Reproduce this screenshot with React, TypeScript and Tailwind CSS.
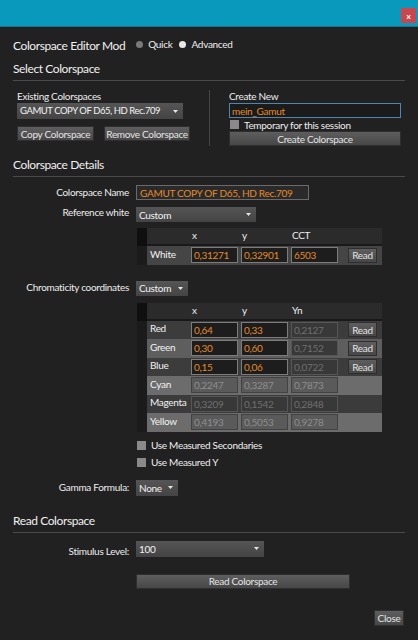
import React from "react";

const font = { fontFamily: "Lato, 'Liberation Sans', sans-serif" };

function Arrow() {
  return (
    <svg width="5" height="3" viewBox="0 0 5 3" className="shrink-0">
      <path d="M0 0 L5 0 L2.5 3 Z" fill="#e6e6e6" />
    </svg>
  );
}

function Dropdown({
  width,
  value,
  h = "h-[16px]",
  text = "text-[10px]",
}: {
  width: string;
  value: string;
  h?: string;
  text?: string;
}) {
  return (
    <div
      className={`${width} ${h} flex items-center justify-between pl-[3px] pr-[5px] bg-gradient-to-b from-[#555555] to-[#444444] ${text} text-[#f2f2f2] whitespace-nowrap`}
    >
      <span className="leading-none">{value}</span>
      <Arrow />
    </div>
  );
}

function Button({ className, children }: { className: string; children: React.ReactNode }) {
  return (
    <div
      className={`${className} flex items-center justify-center bg-gradient-to-b from-[#5e5e5e] to-[#474747] border border-[#2e2e2e] text-[10px] leading-none text-[#e4e4e4] whitespace-nowrap`}
    >
      {children}
    </div>
  );
}

function Cell({ value, edit, light }: { value: string; edit?: boolean; light?: boolean }) {
  let cls = "bg-[#383838] border-[#565656] text-[#6f6f6f]";
  if (edit) cls = "bg-[#1d1d1d] border-[#7c7c7c] text-[#e38a2c]";
  else if (light) cls = "bg-[#5a5a5a] border-[#424242] text-[#8e8e8e]";
  return (
    <div className={`w-[47px] h-[16px] border ${cls} pl-[2px] flex items-center text-[10px] leading-none`}>
      {value}
    </div>
  );
}

type Row = {
  name: string;
  vals: string[];
  edit: boolean[];
  bg: string;
  light?: boolean;
  read?: boolean;
};

function TableHeader({ cols }: { cols: string[] }) {
  return (
    <div className="flex h-[18px]">
      <div className="w-[10px] bg-[#0f0f0f]" />
      <div className="flex-1 flex bg-[#2b2b2b] border-b-[2px] border-[#191919] text-[10px] text-[#eeeeee] items-end pb-[1px]">
        <div className="w-[45px]" />
        <div className="w-[50px]">{cols[0]}</div>
        <div className="w-[50px]">{cols[1]}</div>
        <div className="w-[50px]">{cols[2]}</div>
      </div>
    </div>
  );
}

function TableRow({ row }: { row: Row }) {
  return (
    <div className="flex h-[18.5px]">
      <div className="w-[10px] bg-[#1b1b1b]" />
      <div className={`flex-1 flex items-center ${row.bg}`}>
        <div className="w-[44px] pl-[3px] text-[10px] text-[#f2f2f2] leading-none -mt-[3px] whitespace-nowrap">{row.name}</div>
        <Cell value={row.vals[0]} edit={row.edit[0]} light={row.light} />
        <div className="w-[3px]" />
        <Cell value={row.vals[1]} edit={row.edit[1]} light={row.light} />
        <div className="w-[3px]" />
        <Cell value={row.vals[2]} edit={row.edit[2]} light={row.light} />
        {row.read && <Button className="ml-[10px] w-[29px] h-[15px]">Read</Button>}
      </div>
    </div>
  );
}

function Heading({ children }: { children: React.ReactNode }) {
  return (
    <div className="border-b border-[#4a4a4a] pb-[3px] text-[12px] tracking-[-0.4px] text-[#f0f0f0] leading-[16px]">
      {children}
    </div>
  );
}

function Checkbox({ label }: { label: string }) {
  return (
    <div className="h-[11px] flex items-center gap-[5px] text-[10px] text-[#eeeeee] leading-none whitespace-nowrap">
      <div className="w-[9px] h-[9px] bg-[#8a8a8a]" />
      <span>{label}</span>
    </div>
  );
}

export default function App() {
  const whiteRow: Row = {
    name: "White",
    vals: ["0,31271", "0,32901", "6503"],
    edit: [true, true, true],
    bg: "bg-[#454545]",
    read: true,
  };

  const rows: Row[] = [
    { name: "Red", vals: ["0,64", "0,33", "0,2127"], edit: [true, true, false], bg: "bg-[#3c3c3c]", read: true },
    { name: "Green", vals: ["0,30", "0,60", "0,7152"], edit: [true, true, false], bg: "bg-[#5e5e5e]", read: true },
    { name: "Blue", vals: ["0,15", "0,06", "0,0722"], edit: [true, true, false], bg: "bg-[#3c3c3c]", read: true },
    { name: "Cyan", vals: ["0,2247", "0,3287", "0,7873"], edit: [false, false, false], bg: "bg-[#6c6c6c]", light: true },
    { name: "Magenta", vals: ["0,3209", "0,1542", "0,2848"], edit: [false, false, false], bg: "bg-[#3b3b3b]" },
    { name: "Yellow", vals: ["0,4193", "0,5053", "0,9278"], edit: [false, false, false], bg: "bg-[#6c6c6c]", light: true },
  ];

  return (
    <div style={font} className="w-[418px] h-[640px] bg-[#212121] flex flex-col overflow-hidden tracking-[-0.3px]">
      {/* title bar */}
      <div className="h-[27px] shrink-0 bg-[#0899bc] border-b border-[#23708a] flex justify-end items-start pt-[8px] pr-[2px]">
        <div className="w-[15px] h-[15px] bg-[#c8474e] flex items-center justify-center text-[8px] font-bold text-white leading-none">
          x
        </div>
      </div>

      <div className="px-[13px] flex flex-col">
        {/* editor mode */}
        <div className="mt-[11px] flex items-center h-[16px] whitespace-nowrap">
          <span className="text-[12px] tracking-[-0.4px] text-[#f0f0f0]">Colorspace Editor Mod</span>
          <div className="ml-[11px] flex items-center gap-[5px] text-[10px] text-[#eeeeee] -mt-[3px]">
            <div className="w-[7px] h-[7px] rounded-full bg-[#7a7a7a]" />
            <span>Quick</span>
            <div className="ml-[2px] w-[7px] h-[7px] rounded-full bg-[#e8e8e8]" />
            <span>Advanced</span>
          </div>
        </div>

        {/* select colorspace */}
        <div className="mt-[7px]">
          <Heading>Select Colorspace</Heading>
        </div>

        <div className="flex mt-[9px] h-[56px]">
          <div className="w-[196px] pl-[4px] flex flex-col">
            <span className="h-[13px] text-[10px] text-[#eeeeee] leading-[13px] whitespace-nowrap">Existing Colorspaces</span>
            <Dropdown
              width="w-[166px]"
              value="GAMUT COPY OF D65, HD Rec.709"
              text="text-[9.5px] tracking-[-0.45px]"
            />
            <div className="flex mt-[7px] gap-[10px]">
              <Button className="w-[77px] h-[15px]">Copy Colorspace</Button>
              <Button className="w-[86px] h-[15px]">Remove Colorspace</Button>
            </div>
          </div>
          <div className="w-[1px] bg-[#444444]" />
          <div className="ml-[19px] w-[172px] flex flex-col">
            <span className="h-[13px] text-[10px] text-[#eeeeee] leading-[13px] whitespace-nowrap">Create New</span>
            <div className="h-[15px] border border-[#4f86b0] bg-[#1b1b1b] text-[10px] text-[#e38a2c] pl-[2px] flex items-center leading-none">
              mein_Gamut
            </div>
            <div className="mt-[1px] ml-[1px]">
              <Checkbox label="Temporary for this session" />
            </div>
            <Button className="mt-[1px] w-[172px] h-[15px]">Create Colorspace</Button>
          </div>
        </div>

        {/* colorspace details */}
        <div className="mt-[11px]">
          <Heading>Colorspace Details</Heading>
        </div>

        <div className="grid grid-cols-[116px_1fr] gap-x-[7px] mt-[8px] text-[10px] text-[#eeeeee]">
          <div className="text-right leading-[10px] mt-[2px] whitespace-nowrap">Colorspace Name</div>
          <div className="w-[173px] h-[15px] border border-[#6a6a6a] bg-[#2a2a2a] text-[#e38a2c] pl-[3px] flex items-center leading-none whitespace-nowrap">
            GAMUT COPY OF D65, HD Rec.709
          </div>

          <div className="text-right leading-[10px] mt-[7px] whitespace-nowrap">Reference white</div>
          <div className="mt-[7px]">
            <Dropdown width="w-[120px]" value="Custom" h="h-[15px]" />
          </div>

          <div />
          <div className="mt-[6px] ml-[1px] w-[245px] flex flex-col">
            <TableHeader cols={["x", "y", "CCT"]} />
            <TableRow row={whiteRow} />
          </div>

          <div className="text-right leading-[10px] mt-[17px] whitespace-nowrap">Chromaticity coordinates</div>
          <div className="mt-[16px]">
            <Dropdown width="w-[52px]" value="Custom" h="h-[15px]" />
          </div>

          <div />
          <div className="mt-[7px] ml-[1px] w-[245px] flex flex-col">
            <TableHeader cols={["x", "y", "Yn"]} />
            {rows.map((r) => (
              <TableRow key={r.name} row={r} />
            ))}
          </div>

          <div />
          <div className="mt-[8px] ml-[1px] flex flex-col gap-[6px]">
            <Checkbox label="Use Measured Secondaries" />
            <Checkbox label="Use Measured Y" />
          </div>

          <div className="text-right leading-[10px] mt-[14px] whitespace-nowrap">Gamma Formula:</div>
          <div className="mt-[12px]">
            <Dropdown width="w-[42px]" value="None" />
          </div>
        </div>

        {/* read colorspace */}
        <div className="mt-[17px]">
          <Heading>Read Colorspace</Heading>
        </div>

        <div className="grid grid-cols-[116px_1fr] gap-x-[7px] mt-[8px] text-[10px] text-[#eeeeee]">
          <div className="text-right leading-[10px] mt-[5px] whitespace-nowrap">Stimulus Level:</div>
          <Dropdown width="w-[128px]" value="100" />
          <div />
          <Button className="mt-[17px] w-[214px] h-[15px]">Read Colorspace</Button>
        </div>

        <div className="flex justify-end mt-[21px] pr-[1px]">
          <Button className="w-[30px] h-[16px]">Close</Button>
        </div>
      </div>
    </div>
  );
}
